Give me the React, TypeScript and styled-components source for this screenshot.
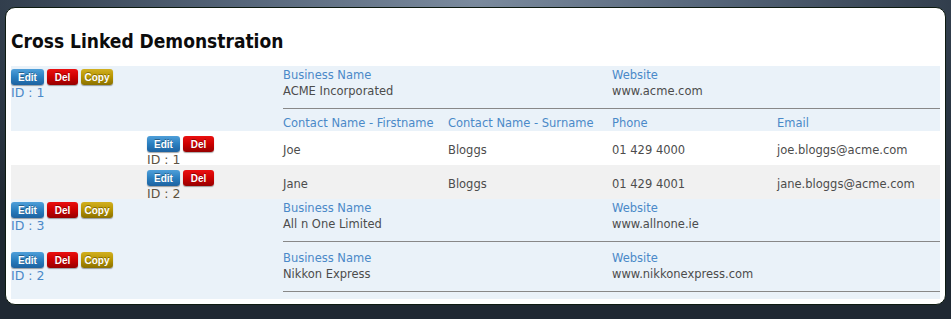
import React from "react";
import styled, {createGlobalStyle} from "styled-components";

const GlobalStyle = createGlobalStyle`
  html, body {
    margin: 0;
    padding: 0;
  }
  body {
    width: 951px;
    height: 319px;
    overflow: hidden;
    background: radial-gradient(ellipse 70% 90% at 50% 0%, #7b8b9e 0%, #56667a 35%, #2e3a48 75%, #1f2832 100%);
    font-family: "DejaVu Sans", Verdana, sans-serif;
  }
`;

const COLS = '136px 136px 165px 164px 165px 1fr';

const Page = styled.div`
  padding: 7px 5px 0 5px;
`;

const Card = styled.div`
  background: white;
  border: 1px solid #0d1a10;
  border-radius: 10px;
  height: 298px;
  box-sizing: border-box;
  padding: 0 5px;
`;

const Title = styled.h1`
  margin: 0;
  padding: 22px 0 0 0;
  height: 58px;
  box-sizing: border-box;
  font-size: 19px;
  font-weight: bold;
  color: #0c0c0c;
  font-family: "DejaVu Sans Condensed", "DejaVu Sans", sans-serif;
  font-stretch: condensed;
`;

const Block = styled.div<{ $bg: string }>`
  display: grid;
  grid-template-columns: ${COLS};
  background: ${p => p.$bg};
`;

const ActionCell = styled.div<{ $col: string; $pad: number }>`
  grid-column: ${p => p.$col};
  padding-top: ${p => p.$pad}px;
`;

const Buttons = styled.div`
  display: flex;
  gap: 3px;
`;

const Btn = styled.button<{ $kind: 'edit' | 'del' | 'copy' }>`
  height: 16px;
  padding: 0;
  border: none;
  border-radius: 3px;
  font-family: "Liberation Sans", Arial, sans-serif;
  font-weight: bold;
  font-size: 10px;
  color: white;
  text-shadow: 0 -1px 0 rgba(0, 0, 0, 0.35);
  box-shadow: 0 1px 1px rgba(0, 0, 0, 0.35);
  cursor: pointer;
  background: ${p => p.$kind === 'edit'
    ? 'linear-gradient(#4f9fd9 0%, #2a7fc0 50%, #1d62a0 100%)'
    : p.$kind === 'del'
      ? 'linear-gradient(#ea1010 0%, #cc0000 50%, #960000 100%)'
      : 'linear-gradient(#d2b021 0%, #b69400 50%, #8a7000 100%)'};
  width: ${p => p.$kind === 'del' ? 31 : p.$kind === 'edit' ? 33 : 32}px;
`;

const IdText = styled.div<{ $color: string }>`
  font-size: 12.5px;
  line-height: 15px;
  color: ${p => p.$color};
`;

const Detail = styled.div`
  grid-column: 3 / 7;
  display: grid;
  grid-template-columns: 329px 1fr;
  padding-top: 1px;
`;

const Field = styled.div`
  padding-left: 0;
`;

const Label = styled.div`
  font-size: 11.5px;
  line-height: 16px;
  color: #4a89c8;
`;

const Value = styled.div`
  font-size: 11.5px;
  line-height: 16px;
  color: #4c4c4c;
`;

const Rule = styled.div<{ $after: number }>`
  grid-column: 1 / 3;
  height: 1px;
  background: #888;
  margin: 9px 0 ${p => p.$after}px 0;
`;

const HeaderRow = styled.div`
  grid-column: 1 / 3;
  display: grid;
  grid-template-columns: 165px 164px 165px 1fr;
`;

const ContactRow = styled.div<{ $bg: string }>`
  display: grid;
  grid-template-columns: ${COLS};
  background: ${p => p.$bg};
  height: 34px;
`;

const Cell = styled.div`
  align-self: center;
  font-size: 11.5px;
  color: #4c4c4c;
  padding: 1px 0 0 0;
`;

type Contact = { id: number, first: string, last: string, phone: string, email: string };
type Business = { id: number, name: string, site: string, contacts: Contact[] };

const data: Business[] = [
  {
    id: 1, name: 'ACME Incorporated', site: 'www.acme.com', contacts: [
      {id: 1, first: 'Joe', last: 'Bloggs', phone: '01 429 4000', email: 'joe.bloggs@acme.com'},
      {id: 2, first: 'Jane', last: 'Bloggs', phone: '01 429 4001', email: 'jane.bloggs@acme.com'},
    ]
  },
  {id: 3, name: 'All n One Limited', site: 'www.allnone.ie', contacts: []},
  {id: 2, name: 'Nikkon Express', site: 'www.nikkonexpress.com', contacts: []},
];

function App() {
  return (
    <Page>
      <GlobalStyle/>
      <Card>
        <Title>Cross Linked Demonstration</Title>
        {data.map(b => <React.Fragment key={b.id}>
          <Block $bg="#eaf2f9">
            <ActionCell $col="1 / 3" $pad={3}>
              <Buttons>
                <Btn $kind="edit">Edit</Btn>
                <Btn $kind="del">Del</Btn>
                <Btn $kind="copy">Copy</Btn>
              </Buttons>
              <IdText $color="#4a89c8">ID : {b.id}</IdText>
            </ActionCell>
            <Detail>
              <Field>
                <Label>Business Name</Label>
                <Value>{b.name}</Value>
              </Field>
              <Field>
                <Label>Website</Label>
                <Value>{b.site}</Value>
              </Field>
              <Rule $after={b.contacts.length ? 6 : 7}/>
              {b.contacts.length > 0 && <HeaderRow>
                <Field><Label>Contact Name - Firstname</Label></Field>
                <Field><Label>Contact Name - Surname</Label></Field>
                <Field><Label>Phone</Label></Field>
                <Field><Label>Email</Label></Field>
              </HeaderRow>}
            </Detail>
          </Block>
          {b.contacts.map((c, i) =>
            <ContactRow key={c.id} $bg={i % 2 ? '#f1f1f1' : '#ffffff'}>
              <ActionCell $col="2 / 3" $pad={5}>
                <Buttons>
                  <Btn $kind="edit">Edit</Btn>
                  <Btn $kind="del">Del</Btn>
                </Buttons>
                <IdText $color="#5c5242">ID : {c.id}</IdText>
              </ActionCell>
              <Cell>{c.first}</Cell>
              <Cell>{c.last}</Cell>
              <Cell>{c.phone}</Cell>
              <Cell>{c.email}</Cell>
            </ContactRow>
          )}
        </React.Fragment>)}
      </Card>
    </Page>
  );
}

export default App;
